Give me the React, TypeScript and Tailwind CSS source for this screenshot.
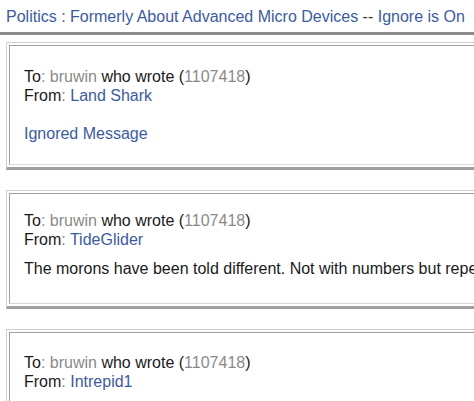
import React from "react";

const blue = "text-[#3b5b9e]";
const gray = "text-[#8a8a8a]";

function Box({
  name,
  children,
  gapClass,
  padClass,
}: {
  name: string;
  children: React.ReactNode;
  gapClass: string;
  padClass: string;
}) {
  return (
    <div className="w-[900px] border-t border-l border-r border-[#cfcfcf] border-b-[3px] border-b-[#a0a0a0] p-[2px]">
      <div className={"border-t border-l border-[#a0a0a0] border-b border-b-[#d8d8d8] pl-[14px] text-[16px] leading-[19px] text-[#1a1a1a] " + padClass}>
        <div>
          To<span className={gray}>:</span> <span className={gray}>bruwin</span> who wrote (<span className={gray}>1107418</span>)
        </div>
        <div>
          From<span className={gray}>:</span> <span className={blue}>{name}</span>
        </div>
        <div className={gapClass}>{children}</div>
      </div>
    </div>
  );
}

export default function App() {
  return (
    <div className="w-[474px] h-[401px] overflow-hidden bg-white" style={{ fontFamily: '"Liberation Sans", Arial, sans-serif' }}>
      <div className="px-[6px] pt-[7px] pb-[6px] text-[16px] leading-[19px] whitespace-nowrap">
        <span className={blue}>Politics : Formerly About Advanced Micro Devices</span>
        <span className="text-[#333]"> -- </span>
        <span className={blue}>Ignore is On</span>
      </div>
      <div className="h-[3px] w-full bg-[#8c8c8c]" />
      <div className="pl-[6px] pt-[7px] flex flex-col gap-[20px]">
        <Box name="Land Shark" gapClass="mt-[19px]" padClass="pt-[21px] pb-[21px]">
          <span className={blue}>Ignored Message</span>
        </Box>
        <Box name="TideGlider" gapClass="mt-[10px] whitespace-nowrap" padClass="pt-[17px] pb-[25px]">
          The morons have been told different. Not with numbers but repeatedly with words and nothing else.
        </Box>
        <Box name="Intrepid1" gapClass="mt-[10px]" padClass="pt-[20px] pb-[21px]">
          &nbsp;
        </Box>
      </div>
    </div>
  );
}
